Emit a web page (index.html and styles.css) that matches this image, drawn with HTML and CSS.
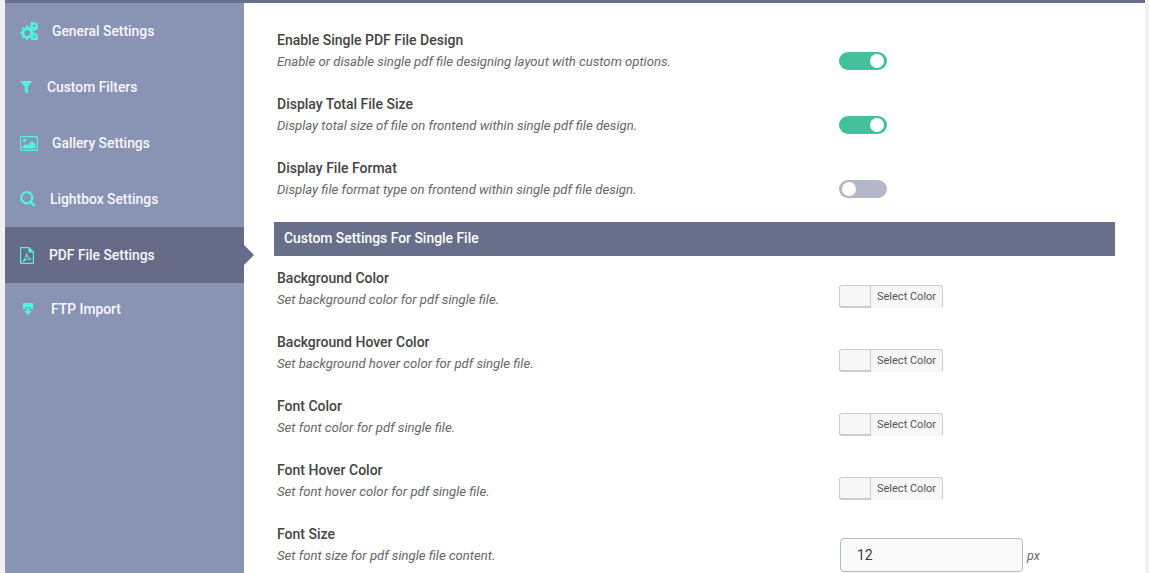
FILE: index.html
```html
<!DOCTYPE html>
<html lang="en">
<head>
<meta charset="utf-8">
<title>PDF File Settings</title>
<link rel="stylesheet" href="styles.css">
</head>
<body>
<div class="app">
  <nav class="sidebar">
    <a class="nav-item"><svg class="ico ico-gears" viewBox="0 0 18 18"><path fill-rule="evenodd" d="M6 3.800h2.400l.4 1.600 1.200.5 1.400-.8 1.500 1.600-.8 1.400.5 1.200 1.400.4v2.200l-1.400.4-.5 1.200.8 1.400-1.500 1.600-1.400-.8-1.200.5-.4 1.500H6l-.4-1.500-1.200-.5-1.400.8-1.600-1.600.8-1.400-.5-1.200L.3 12V9.700l1.400-.4.5-1.200-.8-1.400L3 5.100l1.400.8 1.200-.5zM7.200 7.900a3 3 0 1 0 0 6 3 3 0 0 0 0-6z"/><path fill-rule="evenodd" d="M13.300 0h1.500l.2 1 .8.4.9-.5.9 1-.5.8.3.8 1 .2v1.500l-1 .2-.3.8.5.8-.9 1-.9-.5-.8.4-.2 1h-1.500l-.2-1-.8-.4-.9.5-.9-1 .5-.8-.3-.8-1-.2V2.900l1-.2.3-.8-.5-.8.9-1 .9.5.8-.4zm.8 2.400a1.300 1.300 0 1 0 0 2.600 1.300 1.300 0 0 0 0-2.600z"/><path fill-rule="evenodd" d="M13.500 10.500h1.500l.2 1 .8.4.9-.5.9 1-.5.8.3.8 1 .2v1.500l-1 .2-.3.8.5.8-.9 1-.9-.5-.8.3-.2.7h-1.500l-.2-.7-.8-.3-.9.5-.9-1 .5-.8-.3-.8-1-.2v-1.500l1-.2.3-.8-.5-.8.9-1 .9.5.8-.4zm.8 2.700a1.300 1.300 0 1 0 0 2.600 1.300 1.300 0 0 0 0-2.600z"/></svg><span class="lbl">General Settings</span></a>
    <a class="nav-item"><svg class="ico ico-filter" viewBox="0 0 14 14"><path d="M0 0h13.500L8.500 6.200V14l-3.500-2.600V6.200z"/></svg><span class="lbl">Custom Filters</span></a>
    <a class="nav-item"><svg class="ico ico-image" viewBox="0 0 18 15"><path fill-rule="evenodd" d="M1 0h16a1 1 0 0 1 1 1v13a1 1 0 0 1-1 1H1a1 1 0 0 1-1-1V1a1 1 0 0 1 1-1zm.2 1.200v12.600h15.600V1.200z"/><circle cx="4.500" cy="4.500" r="1.700"/><path d="M2.500 12.500v-2l3-2.600 2 1.600 4.500-4.800 3.500 3.800v4z"/></svg><span class="lbl">Gallery Settings</span></a>
    <a class="nav-item"><svg class="ico ico-search" viewBox="0 0 16 16"><path fill-rule="evenodd" d="M6.700 0a6.700 6.700 0 0 1 5.400 10.600l3.500 3.500-1.700 1.700-3.500-3.500A6.700 6.700 0 1 1 6.700 0zm0 2.300a4.400 4.400 0 1 0 0 8.800 4.400 4.400 0 0 0 0-8.800z"/></svg><span class="lbl">Lightbox Settings</span></a>
    <a class="nav-item active"><svg class="ico ico-pdf" viewBox="0 0 14 17"><path fill="none" stroke="currentColor" stroke-width="1.200" d="M.6.600h8.300l4.500 4.500v11.300H.6z"/><path d="M8.500.6v5h5z"/><path fill="none" stroke="currentColor" stroke-width="1.200" d="M2.500 14.500c2-1 3.500-4 4-8 .5 3 2 5 5 5.500-3-.2-6 .8-9 2.500z"/></svg><span class="lbl">PDF File Settings</span></a>
    <a class="nav-item short"><svg class="ico ico-import" viewBox="0 0 10 12"><path d="M0 0h10v6H7.500v-2h-5v2H0z"/><path d="M3.500 5h3v3H9l-4 4-4-4h2.500z"/></svg><span class="lbl">FTP Import</span></a>
  </nav>
  <main class="content">
    <section class="group">
      <div class="row"><div class="text"><h3>Enable Single PDF File Design</h3><p>Enable or disable single pdf file designing layout with custom options.</p></div><span class="toggle on"></span></div>
      <div class="row"><div class="text"><h3>Display Total File Size</h3><p>Display total size of file on frontend within single pdf file design.</p></div><span class="toggle on"></span></div>
      <div class="row"><div class="text"><h3>Display File Format</h3><p>Display file format type on frontend within single pdf file design.</p></div><span class="toggle"></span></div>
    </section>
    <h2 class="band">Custom Settings For Single File</h2>
    <section class="group">
      <div class="row"><div class="text"><h3>Background Color</h3><p>Set background color for pdf single file.</p></div><span class="picker"><span class="swatch"></span><span class="pick-label">Select Color</span></span></div>
      <div class="row"><div class="text"><h3>Background Hover Color</h3><p>Set background hover color for pdf single file.</p></div><span class="picker"><span class="swatch"></span><span class="pick-label">Select Color</span></span></div>
      <div class="row"><div class="text"><h3>Font Color</h3><p>Set font color for pdf single file.</p></div><span class="picker"><span class="swatch"></span><span class="pick-label">Select Color</span></span></div>
      <div class="row"><div class="text"><h3>Font Hover Color</h3><p>Set font hover color for pdf single file.</p></div><span class="picker"><span class="swatch"></span><span class="pick-label">Select Color</span></span></div>
      <div class="row"><div class="text"><h3>Font Size</h3><p>Set font size for pdf single file content.</p></div><span class="size"><span class="num">12</span><em>px</em></span></div>
    </section>
  </main>
</div>
</body>
</html>
```
FILE: styles.css
```css
* { box-sizing: border-box; }
html, body { margin: 0; height: 573px; overflow: hidden; background: #f1f1f1; }
body { font-family: Roboto, "Liberation Sans", sans-serif; padding: 0 4px 0 5px; }
.app { display: flex; height: 573px; border-top: 3px solid #686f8a; background: #fff; }
.sidebar { width: 239px; flex: none; background: #8993b3; }
.nav-item { display: flex; align-items: center; height: 56px; padding-left: 15px; color: #f6f8fb; font-size: 13.85px; font-weight: 500; position: relative; }
.nav-item.short { height: 54px; padding-bottom: 2px; }
.nav-item.active { background: #666c88; }
.nav-item.active::after { content: ""; position: absolute; left: 239px; top: 18px; border-left: 10px solid #666c88; border-top: 10px solid transparent; border-bottom: 10px solid transparent; }
.ico { display: block; flex: none; fill: #4ef5e3; color: #4ef5e3; }
.ico-gears { width: 18px; height: 18px; margin-right: 14px; }
.ico-filter { width: 13px; height: 13px; margin-right: 14px; }
.ico-image { width: 18px; height: 15px; margin-right: 14px; }
.ico-search { width: 16px; height: 16px; margin-right: 14px; }
.ico-pdf { width: 14px; height: 17px; margin-right: 15px; }
.ico-import { width: 10px; height: 12px; margin: 0 18px 0 3px; }
.lbl { display: block; line-height: 16px; }
.content { flex: 1; padding: 15px 30px 0 30px; min-width: 0; }
.group { padding-left: 3px; }
.row { display: flex; height: 64px; align-items: center; }
.text { width: 562px; flex: none; align-self: flex-start; padding-top: 12px; }
h3 { margin: 0; font-size: 14px; font-weight: 500; line-height: 20px; color: #444; }
p { margin: 3px 0 0; font-size: 13.13px; line-height: 18px; font-style: italic; color: #666; }
.toggle { display: block; margin-top: 22px; width: 48px; height: 18px; border-radius: 9px; background: #b4b7c7; position: relative; }
.toggle::after { content: ""; position: absolute; top: 2px; left: 3px; width: 14px; height: 14px; border-radius: 50%; background: #fff; }
.toggle.on { background: #41c09b; }
.toggle.on::after { left: 31px; }
.band { margin: 12px 0 0; height: 34px; line-height: 33px; background: #686f8a; color: #fff; font-size: 13.9px; font-weight: 500; padding-left: 10px; }
.picker { display: flex; width: 104px; height: 23px; margin-top: 16px; }
.swatch { width: 32px; flex: none; background: #f7f7f7; border: 1px solid #ccc; border-bottom-width: 2px; border-radius: 3px 0 0 3px; }
.pick-label { flex: 1; font-size: 11px; color: #555; line-height: 21px; padding-left: 6px; white-space: nowrap; background: #f7f7f7; border-top: 1px solid #ccc; border-right: 1px solid #ccc; border-radius: 0 3px 3px 0; }
.size { display: flex; align-items: center; gap: 4px; margin: 22px 0 0 1px; }
.num { display: block; width: 183px; height: 34px; border: 1px solid #b4b9c6; border-radius: 4px; background: #fafafa; font-size: 14px; line-height: 32px; padding-left: 16px; color: #3b3b3b; }
.size em { font-size: 12.5px; color: #666; }
```
